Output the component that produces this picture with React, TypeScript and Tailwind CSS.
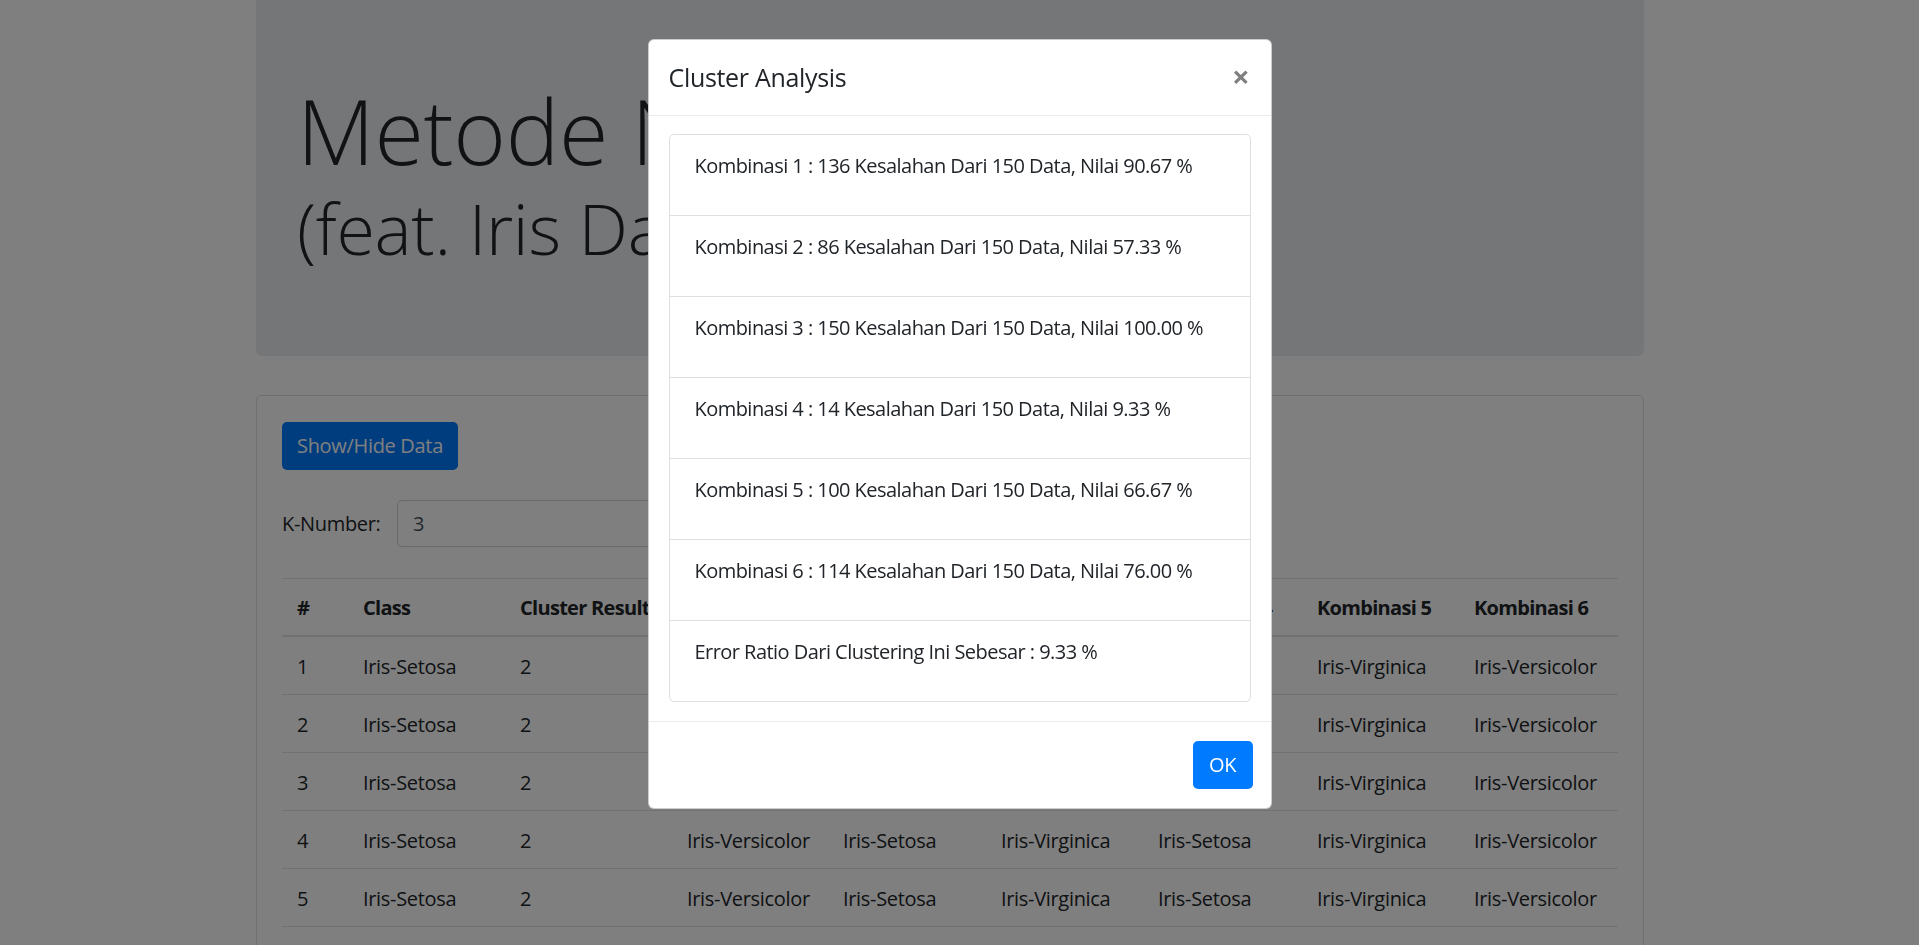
import React from "react";

const font = { fontFamily: '"Segoe UI", "Open Sans", "Noto Sans", sans-serif' };

const rows = [1, 2, 3, 4, 5, 6, 7];
const cols = ["#", "Class", "Cluster Result", "Kombinasi 1", "Kombinasi 2", "Kombinasi 3", "Kombinasi 4", "Kombinasi 5", "Kombinasi 6"];
const rowVals = ["Iris-Setosa", "2", "Iris-Versicolor", "Iris-Setosa", "Iris-Virginica", "Iris-Setosa", "Iris-Virginica", "Iris-Versicolor"];

const items = [
  "Kombinasi 1 : 136 Kesalahan Dari 150 Data, Nilai 90.67 %",
  "Kombinasi 2 : 86 Kesalahan Dari 150 Data, Nilai 57.33 %",
  "Kombinasi 3 : 150 Kesalahan Dari 150 Data, Nilai 100.00 %",
  "Kombinasi 4 : 14 Kesalahan Dari 150 Data, Nilai 9.33 %",
  "Kombinasi 5 : 100 Kesalahan Dari 150 Data, Nilai 66.67 %",
  "Kombinasi 6 : 114 Kesalahan Dari 150 Data, Nilai 76.00 %",
  "Error Ratio Dari Clustering Ini Sebesar : 9.33 %",
];

const grid = "grid grid-cols-[66px_157px_167px_156px_158px_157px_159px_157px_159px]";

export default function App() {
  return (
    <div className="relative h-[945px] w-full overflow-hidden bg-white text-[#212529] tracking-[-0.02em]" style={font}>
      <div className="pr-[19px]">
        <div className="mx-auto w-[1388px]">
          <div className="h-[356px] rounded-b-[6px] bg-[#e9ecef] px-[41px] pt-[76px]">
            <h1 className="whitespace-nowrap text-[90px] font-light leading-[108px]">Metode Naive Bayes</h1>
            <h2 className="mt-[2px] whitespace-nowrap text-[70px] font-light leading-[84px]">(feat. Iris Dataset)</h2>
          </div>
          <div className="mt-[39px] h-[700px] rounded-[5px] border border-[#dfdfdf] px-[25px] pt-[26px]">
            <button className="h-[48px] w-[176px] rounded-[5px] bg-[#007bff] text-[20px] text-white">Show/Hide Data</button>
            <div className="mt-[30px] flex items-center">
              <span className="w-[115px] text-[20px]">K-Number:</span>
              <div className="flex h-[47px] w-[400px] items-center rounded-[5px] border border-[#ced4da] bg-white px-[15px] text-[20px] text-[#495057]">3</div>
            </div>
            <div className="mt-[31px] w-[1336px] text-[20px]">
              <div className={`${grid} h-[59px] items-center border-t border-b-2 border-[#dee2e6] pt-[2px] font-bold tracking-[-0.035em]`}>
                {cols.map((c) => (
                  <div key={c} className="whitespace-nowrap px-[15px]">{c}</div>
                ))}
              </div>
              {rows.map((r) => (
                <div key={r} className={`${grid} h-[58px] items-center border-b border-[#dee2e6] pt-[3px]`}>
                  <div className="px-[15px]">{r}</div>
                  {rowVals.map((v, i) => (
                    <div key={i} className="whitespace-nowrap px-[15px]">{v}</div>
                  ))}
                </div>
              ))}
            </div>
          </div>
        </div>
      </div>

      <div className="fixed inset-0 bg-black/50" />

      <div className="fixed inset-0 flex justify-center pt-[39px]">
        <div className="h-fit w-[624px] rounded-[6px] border border-black/20 bg-white">
          <div className="flex h-[76px] items-center justify-between border-b border-[#e9ecef] pl-[20px] pr-[21px]">
            <h5 className="whitespace-nowrap text-[25px] font-medium leading-[37px]">Cluster Analysis</h5>
            <span className="pb-[2px] text-[31px] font-bold leading-none text-black/50">×</span>
          </div>
          <div className="px-[20px] pb-[19px] pt-[18px]">
            <div className="rounded-[5px] border border-[#dfdfdf]">
              {items.map((t, i) => (
                <div key={i} className="h-[81px] whitespace-nowrap border-b border-[#dfdfdf] px-[25px] pt-[16px] text-[20px] leading-[30px] tracking-[-0.027em] last:h-[80px] last:border-b-0">
                  {t}
                </div>
              ))}
            </div>
          </div>
          <div className="flex h-[87px] items-center justify-end border-t border-[#e9ecef] pr-[18px]">
            <button className="h-[48px] w-[60px] rounded-[5px] bg-[#007bff] text-[20px] text-white">OK</button>
          </div>
        </div>
      </div>
    </div>
  );
}
